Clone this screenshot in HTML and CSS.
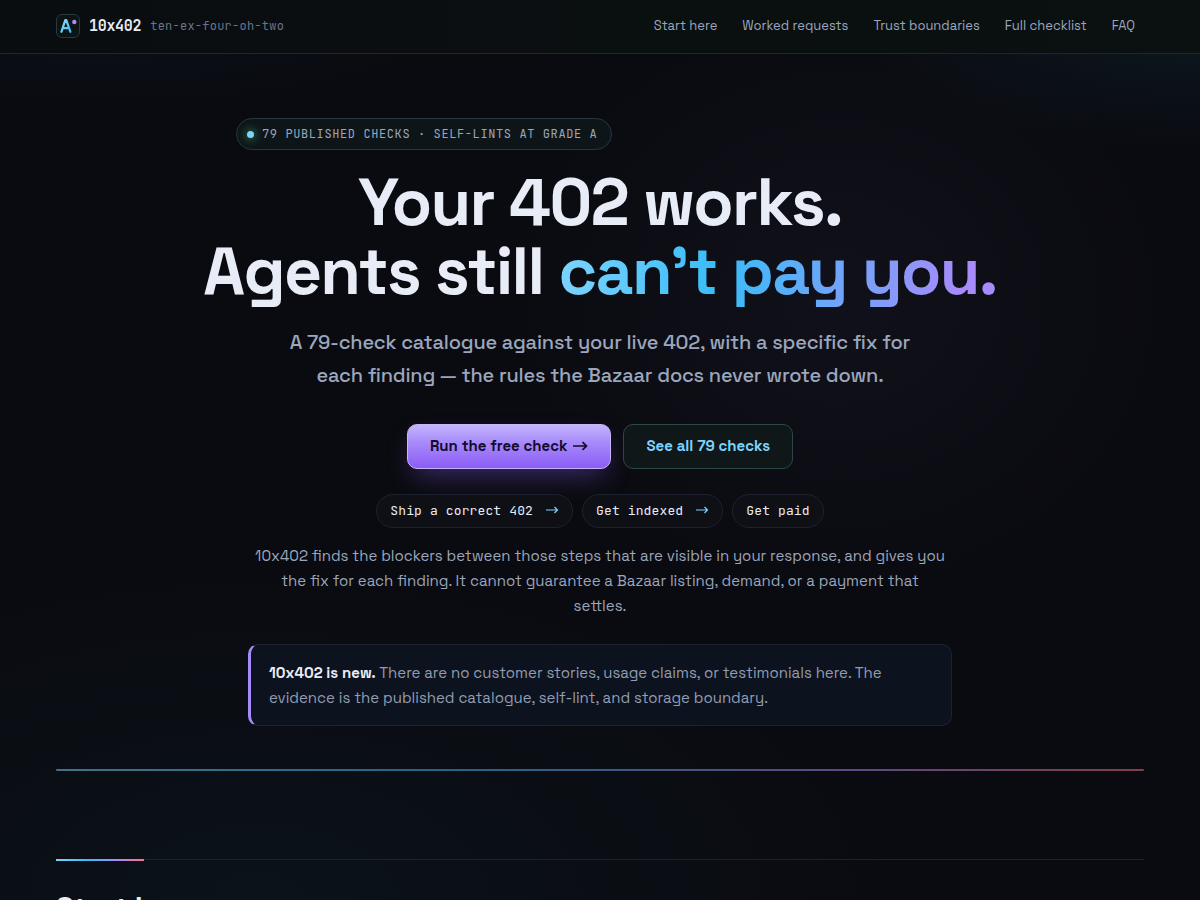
FILE: index.html
```html
<!DOCTYPE html>
<html lang="en">
<head>
    <meta charset="UTF-8">
    <meta name="viewport" content="width=device-width, initial-scale=1.0">
    <title>10x402</title>
    <link rel="stylesheet" href="styles.css">
</head>
<body>
    <header class="site-header">
        <div class="wrap header-row">
            <a class="brand" href="#">
                <svg class="brand-mark" viewBox="0 0 24 24" aria-hidden="true">
                    <defs>
                        <linearGradient id="mark" x1="0" y1="0" x2="1" y2="1">
                            <stop offset="0" stop-color="#8fdcfc"/>
                            <stop offset="1" stop-color="#38bdf8"/>
                        </linearGradient>
                    </defs>
                    <rect x="0.5" y="0.5" width="23" height="23" rx="5.5" fill="#0c1416" stroke="#263c3c"/>
                    <path d="M5.4 17.8 L9.3 6.2 H10.3 L14.4 17.8 M7 14.2 H12.8" fill="none" stroke="url(#mark)" stroke-width="2.2" stroke-linecap="round" stroke-linejoin="round"/>
                    <circle cx="18.3" cy="8" r="2.2" fill="#a78bfa"/>
                </svg>
                <span class="brand-name">10x402</span>
                <span class="brand-say">ten-ex-four-oh-two</span>
            </a>
            <nav class="nav">
                <a href="#start">Start here</a>
                <a href="#worked">Worked requests</a>
                <a href="#trust">Trust boundaries</a>
                <a href="#checklist">Full checklist</a>
                <a href="#faq">FAQ</a>
            </nav>
        </div>
    </header>

    <main class="wrap">
        <section class="hero">
            <div class="hero-top">
                <p class="badge"><span class="dot"></span>79 published checks · self-lints at grade A</p>
            </div>
            <h1>Your 402 works.<br>Agents still <span class="grad">can’t pay you.</span></h1>
            <p class="lead">A 79-check catalogue against your live 402, with a specific fix for each finding — the rules the Bazaar docs never wrote down.</p>
            <div class="actions">
                <a class="btn btn-primary" href="#run">Run the free check
                    <svg class="btn-arrow" viewBox="0 0 16 12" aria-hidden="true"><path d="M1 6 H14.5 M10.5 2.2 L14.5 6 L10.5 9.8"/></svg>
                </a>
                <a class="btn btn-ghost" href="#checklist">See all 79 checks</a>
            </div>
            <ol class="flow">
                <li>Ship a correct 402 <svg class="flow-arrow" viewBox="0 0 14 10" aria-hidden="true"><path d="M1 5 H12.5 M9.5 2 L12.5 5 L9.5 8"/></svg></li>
                <li>Get indexed <svg class="flow-arrow" viewBox="0 0 14 10" aria-hidden="true"><path d="M1 5 H12.5 M9.5 2 L12.5 5 L9.5 8"/></svg></li>
                <li>Get paid</li>
            </ol>
            <p class="scope">10x402 finds the blockers between those steps that are visible in your response, and gives you the fix for each finding. It cannot guarantee a Bazaar listing, demand, or a payment that<br>settles.</p>
            <p class="note"><strong>10x402 is new.</strong> There are no customer stories, usage claims, or testimonials here. The evidence is the published catalogue, self-lint, and storage boundary.</p>
        </section>
        <hr class="rule">
        <section class="section" id="start">
            <h2>Start here</h2>
        </section>
    </main>
</body>
</html>
```
FILE: styles.css
```css
:root {
    --bg: #0a0b10;
    --text: #e8ecf6;
    --muted: #9ba6bd;
    --line: #1c2230;
    --sky: #7dd3fc;
    --violet: #a78bfa;
    --sans: "Space Grotesk", Inter, sans-serif;
    --mono: "JetBrains Mono", "DejaVu Sans Mono", monospace;
}

* {
    box-sizing: border-box;
    margin: 0;
    padding: 0;
}

body {
    min-height: 100vh;
    overflow-x: hidden;
    font-family: var(--sans);
    font-size: 15px;
    line-height: 25px;
    color: var(--text);
    background:
        radial-gradient(360px 150px at 100% 0, rgba(20, 60, 80, 0.3), transparent),
        radial-gradient(400px 110px at 100px 0, rgba(20, 40, 80, 0.2), transparent),
        radial-gradient(340px 300px at 840px 300px, rgba(90, 80, 150, 0.08), transparent),
        radial-gradient(640px 340px at 260px 900px, rgba(14, 50, 66, 0.18), transparent),
        var(--bg);
}

a {
    color: inherit;
    text-decoration: none;
}

.wrap {
    max-width: 1200px;
    margin: 0 auto;
    padding: 0 56px;
}

/* header */
.site-header {
    background: linear-gradient(90deg, #0a0d10, #0a1110);
    border-bottom: 1px solid #1f2533;
}

.header-row {
    display: flex;
    align-items: center;
    justify-content: space-between;
    min-height: 53px;
    padding-bottom: 2px;
}

.brand {
    display: flex;
    align-items: center;
    gap: 9px;
    font-family: var(--mono);
}

.brand-mark {
    width: 24px;
    height: 24px;
}

.brand-name,
.brand-say {
    padding-top: 2px;
}

.brand-name {
    font-size: 15px;
    font-weight: 700;
    letter-spacing: -0.02em;
}

.brand-say {
    font-size: 12px;
    letter-spacing: 0.02em;
    color: #69758d;
}

.nav {
    display: flex;
    gap: 25px;
    padding-right: 9px;
    font-size: 13px;
    color: var(--muted);
}

/* hero */
.hero {
    display: flex;
    flex-direction: column;
    align-items: center;
    padding: 64px 0 43px;
    text-align: center;
}

.hero-top {
    display: flex;
    width: 100%;
    max-width: 728px;
}

.badge {
    display: flex;
    align-items: center;
    gap: 8px;
    height: 32px;
    padding: 0 14px 0 10px;
    border: 1px solid #263645;
    border-radius: 16px;
    background: #0e1519;
    font-family: var(--mono);
    font-size: 12px;
    letter-spacing: 0.05em;
    text-transform: uppercase;
    color: var(--muted);
}

.dot {
    width: 7px;
    height: 7px;
    border-radius: 50%;
    background: var(--sky);
    box-shadow: 0 0 8px 2px rgba(74, 222, 128, 0.4);
}

h1 {
    margin-top: 18px;
    font-size: 66px;
    line-height: 69px;
    font-weight: 700;
    letter-spacing: -0.025em;
}

.grad {
    background: linear-gradient(90deg, #7dd3fc, #38bdf8 36%, #a78bfa 92%);
    -webkit-background-clip: text;
    background-clip: text;
    color: transparent;
}

.lead {
    max-width: 640px;
    margin-top: 20px;
    font-size: 20px;
    line-height: 33px;
    font-weight: 500;
    letter-spacing: -0.01em;
    color: var(--muted);
}

.actions {
    display: flex;
    gap: 12px;
    margin-top: 32px;
}

.btn {
    display: flex;
    align-items: center;
    gap: 5px;
    height: 45px;
    padding: 0 22px 2px;
    border: 1px solid;
    border-radius: 10px;
    font-weight: 600;
}

.btn-primary {
    border-color: #c4b5fd;
    background: linear-gradient(#c4b5fd, #a78bfa 40%, #8b5cf6);
    color: #140a2c;
    box-shadow: 0 12px 28px -8px rgba(139, 92, 246, 0.45);
}

.btn-arrow {
    width: 16px;
    height: 12px;
    fill: none;
    stroke: currentColor;
    stroke-width: 1.7;
}

.btn-ghost {
    border-color: #2b4845;
    background: #0f1719;
    color: var(--sky);
}

.flow {
    display: flex;
    gap: 9px;
    margin-top: 25px;
    list-style: none;
    font-family: var(--mono);
    font-size: 13px;
    letter-spacing: 0.01em;
}

.flow li {
    display: flex;
    align-items: center;
    gap: 12px;
    height: 34px;
    padding: 0 13px 2px;
    border: 1px solid var(--line);
    border-radius: 17px;
    background: #0e1016;
}

.flow-arrow {
    width: 14px;
    height: 10px;
    fill: none;
    stroke: var(--sky);
    stroke-width: 1.2;
}

.scope {
    max-width: 704px;
    margin-top: 15px;
    color: var(--muted);
}

.note {
    width: 100%;
    max-width: 704px;
    margin-top: 26px;
    padding: 15px 18px;
    border: 1px solid var(--line);
    border-left: 3px solid var(--violet);
    border-radius: 10px;
    background: #0d131e;
    text-align: left;
    color: #929db3;
}

.note strong {
    color: var(--text);
}

.rule {
    height: 2px;
    border: 0;
    border-radius: 1px;
    background: linear-gradient(90deg, #7dd3fc, #38bdf8 35%, #a78bfa 70%, #fb7185);
    opacity: 0.5;
}

/* sections */
.section {
    position: relative;
    margin-top: 88px;
    padding-top: 28px;
    border-top: 1px solid var(--line);
}

.section::before {
    content: "";
    position: absolute;
    top: -1px;
    left: 0;
    width: 88px;
    height: 2px;
    background: linear-gradient(90deg, #7dd3fc, #38bdf8 35%, #a78bfa 70%, #fb7185);
}

h2 {
    font-size: 30px;
    line-height: 40px;
    font-weight: 700;
    letter-spacing: -0.02em;
}
```
